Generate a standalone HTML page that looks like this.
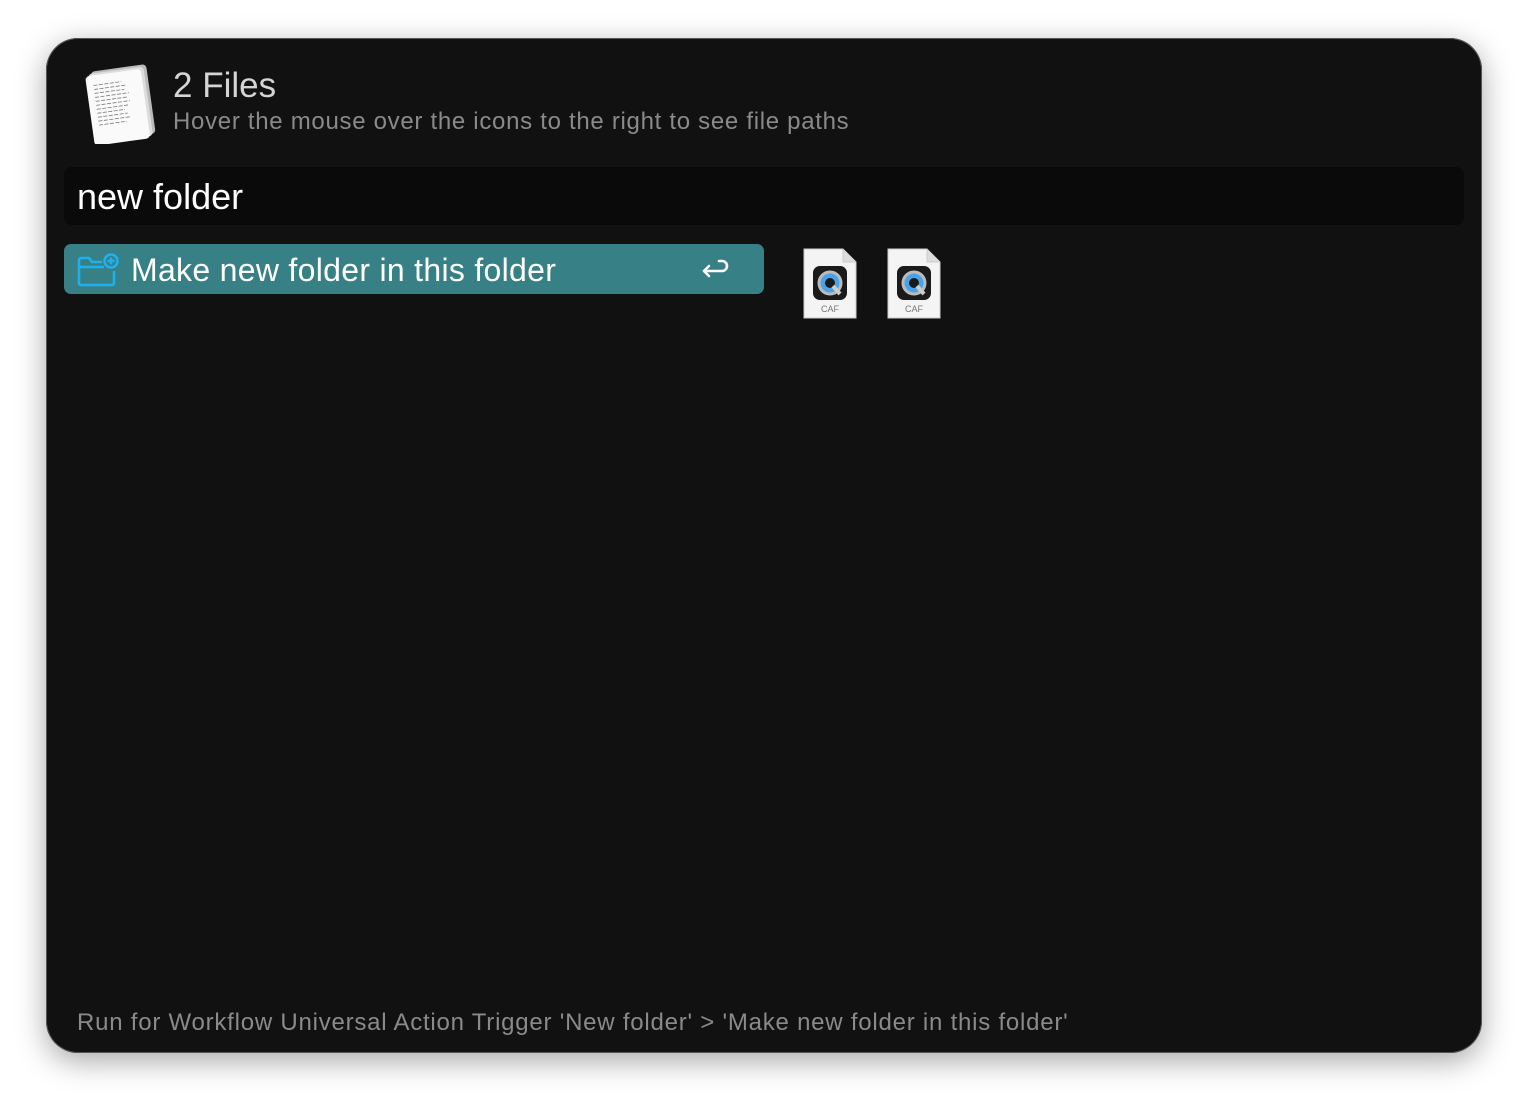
<!DOCTYPE html>
<html><head><meta charset="utf-8"><style>
html,body{margin:0;padding:0;background:#fff;width:1528px;height:1108px;overflow:hidden;font-family:"Liberation Sans",sans-serif}
.win{position:absolute;left:46px;top:38px;width:1436px;height:1015px;border-radius:32px;background:#111;box-shadow:0 0 0 1px #555 inset,0 8px 30px rgba(0,0,0,.35)}
.t1{position:absolute;left:173px;top:66px;font-size:35px;color:#d4d4d4}
.t2{position:absolute;left:173px;top:108px;font-size:24px;color:#8a8a8a;letter-spacing:0.7px}
.search{position:absolute;left:64px;top:167px;width:1400px;height:58px;background:#0a0a0a;border-radius:8px}
.search span{position:absolute;left:13px;top:9px;font-size:36px;color:#fff}
.sel{position:absolute;left:64px;top:244px;width:700px;height:50px;background:#378085;border-radius:7px}
.sel .lbl{position:absolute;left:67px;top:8px;font-size:32px;color:#fff;letter-spacing:0.3px}
.foot{position:absolute;left:77px;top:1009px;font-size:24px;color:#8a8a8a;letter-spacing:0.77px}
.doc{position:absolute;top:248px;width:54px;height:71px}
</style></head><body>
<div class="win"></div>
<svg style="position:absolute;left:84px;top:60px" width="72" height="84" viewBox="0 0 72 84">
<g transform="rotate(-8 36 42)">
<rect x="11" y="8" width="56" height="70" rx="4" fill="#bbb"/>
<rect x="8" y="10" width="56" height="70" rx="4" fill="#ddd"/>
<rect x="5" y="12" width="56" height="70" rx="4" fill="#fafafa"/>
<g stroke="#777" stroke-width="0.8" stroke-dasharray="4 1.5">
<line x1="12" y1="22" x2="40" y2="22"/><line x1="12" y1="26" x2="44" y2="26"/><line x1="12" y1="30" x2="42" y2="30"/><line x1="12" y1="34" x2="46" y2="34"/><line x1="12" y1="38" x2="44" y2="38"/><line x1="12" y1="42" x2="46" y2="42"/><line x1="12" y1="46" x2="44" y2="46"/><line x1="12" y1="50" x2="40" y2="50"/><line x1="12" y1="54" x2="42" y2="54"/><line x1="12" y1="58" x2="44" y2="58"/><line x1="12" y1="62" x2="40" y2="62"/></g></g></svg>
<div class="t1">2 Files</div>
<div class="t2">Hover the mouse over the icons to the right to see file paths</div>
<div class="search"><span>new folder</span></div>
<div class="sel">
<svg style="position:absolute;left:12px;top:8px" width="44" height="36" viewBox="0 0 44 36" fill="none" stroke="#1fb0ee" stroke-width="2.6">
<path d="M3 8 V31 a2 2 0 0 0 2 2 H36 a2 2 0 0 0 2-2 V19"/><path d="M3 8 a2 2 0 0 1 2-2 H13 l3 4 H26"/><path d="M3 15 H28"/>
<circle cx="35" cy="9" r="6.5"/><path d="M35 5.5 V12.5 M31.5 9 H38.5"/></svg>
<div class="lbl">Make new folder in this folder</div>
<svg style="position:absolute;left:636px;top:14px" width="30" height="24" viewBox="0 0 30 24" fill="none" stroke="#fff" stroke-width="2.6" stroke-linecap="round" stroke-linejoin="round">
<path d="M19 3 h3 a5 5 0 0 1 0 10 H4"/><path d="M9 8 L4 13 L9 18"/></svg>
</div>
<svg class="doc" style="left:803px" viewBox="0 0 54 71"><path d="M1 1 H40 L53 14 V70 H1 Z" fill="#f4f4f4" stroke="#ccc"/><path d="M40 1 V14 H53" fill="#ddd" stroke="#ccc"/>
<rect x="10" y="18" width="34" height="34" rx="7" fill="#1a1a1a"/><circle cx="27" cy="35" r="11" fill="#4aa3e8" stroke="#bbb" stroke-width="3"/><circle cx="27" cy="35" r="5" fill="#1a1a1a"/><path d="M30 38 L37 46" stroke="#ccc" stroke-width="4"/>
<text x="27" y="64" font-size="9" fill="#777" text-anchor="middle" font-family="Liberation Sans">CAF</text></svg>
<svg class="doc" style="left:887px" viewBox="0 0 54 71"><path d="M1 1 H40 L53 14 V70 H1 Z" fill="#f4f4f4" stroke="#ccc"/><path d="M40 1 V14 H53" fill="#ddd" stroke="#ccc"/>
<rect x="10" y="18" width="34" height="34" rx="7" fill="#1a1a1a"/><circle cx="27" cy="35" r="11" fill="#4aa3e8" stroke="#bbb" stroke-width="3"/><circle cx="27" cy="35" r="5" fill="#1a1a1a"/><path d="M30 38 L37 46" stroke="#ccc" stroke-width="4"/>
<text x="27" y="64" font-size="9" fill="#777" text-anchor="middle" font-family="Liberation Sans">CAF</text></svg>
<div class="foot">Run for Workflow Universal Action Trigger 'New folder' &gt; 'Make new folder in this folder'</div>
</body></html>
